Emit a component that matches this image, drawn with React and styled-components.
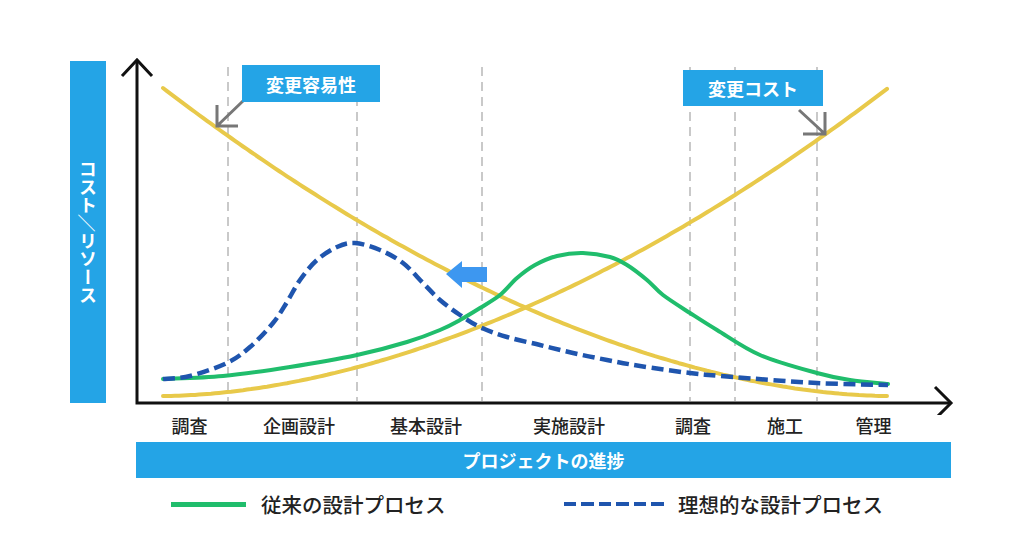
import React from "react";
import styled, { createGlobalStyle } from "styled-components";

const BLUE = "#24a4e6";
const FONT = `"Noto Sans CJK JP", "Noto Sans", sans-serif`;

const GlobalStyle = createGlobalStyle`
  body {
    margin: 0;
    background: #fff;
    font-family: ${FONT};
  }
`;

const Page = styled.div`
  width: 1024px;
  height: 551px;
  overflow: hidden;
  background: #fff;
`;

const ChartRow = styled.div`
  display: flex;
  padding-left: 70px;
  height: 415px;
`;

const AxisTitle = styled.div`
  width: 36px;
  height: 342px;
  margin-top: 61px;
  background: ${BLUE};
  color: #fff;
  writing-mode: vertical-rl;
  display: flex;
  align-items: center;
  justify-content: center;
  font-size: 18px;
  font-weight: 700;
`;

const Sideways = styled.span`
  text-orientation: sideways;
`;

const Plot = styled.div`
  position: relative;
  width: 918px;
  height: 415px;

  svg {
    display: block;
  }
`;

const Callout = styled.div`
  position: absolute;
  left: ${(p) => p.$left - 106}px;
  top: ${(p) => p.$top}px;
  width: ${(p) => p.$width}px;
  height: ${(p) => p.$height}px;
  background: ${BLUE};
  color: #fff;
  display: flex;
  align-items: center;
  justify-content: center;
  font-size: 18px;
  font-weight: 700;
`;

const PhaseRow = styled.div`
  display: grid;
  grid-template-columns: 105px 114px 140px 146px 102px 82px 95px;
  margin-left: 137px;
  height: 20px;
  line-height: 20px;
  font-size: 18px;
  font-weight: 500;
  color: #222;
  text-align: center;
`;

const ProgressBar = styled.div`
  margin: 7px 0 0 136px;
  width: 815px;
  height: 36px;
  background: ${BLUE};
  color: #fff;
  display: flex;
  align-items: center;
  justify-content: center;
  font-size: 18px;
  font-weight: 700;
`;

const Legend = styled.div`
  display: flex;
  align-items: center;
  height: 30px;
  margin: 11px 0 0 171px;
`;

const LegendItem = styled.div`
  display: flex;
  align-items: center;
  gap: ${(p) => p.$gap}px;
  width: ${(p) => (p.$width ? `${p.$width}px` : "auto")};
  font-size: 20.5px;
  font-weight: 500;
  color: #222;
`;

const Swatch = styled.span`
  display: block;
  width: ${(p) => p.$width}px;
  height: ${(p) => (p.$dashed ? 4.5 : 5)}px;
  background: ${(p) =>
    p.$dashed
      ? `repeating-linear-gradient(90deg, ${p.$color} 0 12px, transparent 12px 17.5px)`
      : p.$color};
`;

// catmull-rom through the points, written out as cubic beziers
const smooth = (pts) => {
  const r = (v) => Math.round(v * 10) / 10;
  let d = `M${pts[0][0]},${pts[0][1]}`;
  for (let i = 0; i < pts.length - 1; i++) {
    const p0 = pts[i - 1] || pts[i];
    const p1 = pts[i];
    const p2 = pts[i + 1];
    const p3 = pts[i + 2] || p2;
    const c1 = [r(p1[0] + (p2[0] - p0[0]) / 6), r(p1[1] + (p2[1] - p0[1]) / 6)];
    const c2 = [r(p2[0] - (p3[0] - p1[0]) / 6), r(p2[1] - (p3[1] - p1[1]) / 6)];
    d += ` C${c1[0]},${c1[1]} ${c2[0]},${c2[1]} ${p2[0]},${p2[1]}`;
  }
  return d;
};

// sampled function -> polyline path
const plot = (fn, x0, x1, step = 4) => {
  let d = "";
  for (let x = x0; x <= x1 + 0.01; x += step) {
    const xx = Math.min(x, x1);
    d += `${d ? " L" : "M"}${xx.toFixed(1)},${fn(xx).toFixed(1)}`;
  }
  return d;
};

const X0 = 163;
const X1 = 888;
const SPAN = X1 - X0;
// cost of change rises like a power curve, ease of change is its mirror
const costOfChange = (x) => 396 - 308 * Math.pow((x - X0) / SPAN, 1.8);
const easeOfChange = (x) => costOfChange(X0 + X1 - x);

const traditional = [
  [163, 379], [223, 376], [290, 367], [357, 355], [407, 342], [440, 330],
  [460, 320], [480, 308], [500, 295], [517, 278], [535, 265], [557, 256],
  [583, 253], [610, 257], [627, 265], [647, 280], [663, 295], [690, 313],
  [717, 330], [760, 355], [817, 373], [850, 380], [888, 384],
];

const ideal = [
  [163, 379], [190, 376], [227, 363], [250, 347], [273, 323], [287, 302],
  [300, 280], [317, 260], [337, 247], [355, 243], [380, 250], [403, 263],
  [423, 283], [440, 300], [460, 315], [480, 327], [507, 337], [540, 345],
  [573, 353], [607, 360], [640, 366], [690, 373], [733, 377], [817, 383],
  [888, 385],
];

const gridX = [228, 357, 482, 690, 735, 817];

const phases = ["調査", "企画設計", "基本設計", "実施設計", "調査", "施工", "管理"];

const Chart = () => (
  <svg width="918" height="415" viewBox="106 0 918 415">
    {gridX.map((x) => (
      <line
        key={x}
        x1={x}
        x2={x}
        y1={67}
        y2={401}
        stroke="#c9c9c9"
        strokeWidth="2"
        strokeDasharray="9 6"
      />
    ))}
    <g fill="none" strokeLinecap="round" strokeLinejoin="round">
      <path d={plot(easeOfChange, X0, X1)} stroke="#e8c94a" strokeWidth="4" />
      <path d={plot(costOfChange, X0, X1)} stroke="#e8c94a" strokeWidth="4" />
      <path d={smooth(traditional)} stroke="#20bd6c" strokeWidth="4" />
      <path
        d={smooth(ideal)}
        stroke="#1f55ae"
        strokeWidth="4.5"
        strokeDasharray="12 5.5"
        strokeLinecap="butt"
      />
    </g>
    <polygon
      points="446,274 462,261 462,267 487,267 487,282 462,282 462,288"
      fill="#3d97f0"
    />
    <g fill="none" stroke="#777" strokeWidth="3">
      <path d="M243,101 L217,126 M217,105 L217,126 L238,126" />
      <path d="M799,110 L825,134 M825,112 L825,134 L803,134" />
    </g>
    <g fill="none" stroke="#111" strokeWidth="3">
      <path d="M137,60 L137,403 L951,403" />
      <path d="M122,76 L137,60 L152,76" />
      <path d="M935,387 L951,403 L935,419" />
    </g>
  </svg>
);

export default function App() {
  return (
    <Page>
      <GlobalStyle />
      <ChartRow>
        <AxisTitle>
          コスト<Sideways>／</Sideways>リソース
        </AxisTitle>
        <Plot>
          <Chart />
          <Callout $left={242} $top={65} $width={138} $height={37}>
            変更容易性
          </Callout>
          <Callout $left={683} $top={70} $width={140} $height={36}>
            変更コスト
          </Callout>
        </Plot>
      </ChartRow>
      <PhaseRow>
        {phases.map((p, i) => (
          <span key={i}>{p}</span>
        ))}
      </PhaseRow>
      <ProgressBar>プロジェクトの進捗</ProgressBar>
      <Legend>
        <LegendItem $gap={15} $width={393}>
          <Swatch $width={75} $color="#20bd6c" />
          従来の設計プロセス
        </LegendItem>
        <LegendItem $gap={14}>
          <Swatch $width={100} $color="#1f55ae" $dashed />
          理想的な設計プロセス
        </LegendItem>
      </Legend>
    </Page>
  );
}
